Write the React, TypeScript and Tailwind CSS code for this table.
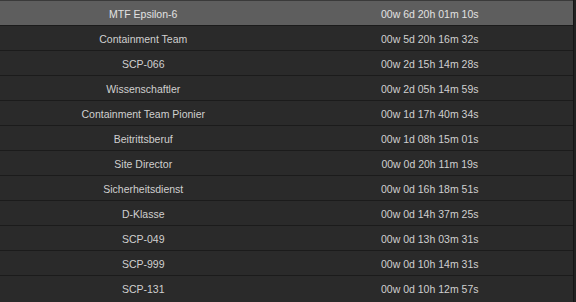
const rows = [
    ["MTF Epsilon-6", "00w 6d 20h 01m 10s"],
    ["Containment Team", "00w 5d 20h 16m 32s"],
    ["SCP-066", "00w 2d 15h 14m 28s"],
    ["Wissenschaftler", "00w 2d 05h 14m 59s"],
    ["Containment Team Pionier", "00w 1d 17h 40m 34s"],
    ["Beitrittsberuf", "00w 1d 08h 15m 01s"],
    ["Site Director", "00w 0d 20h 11m 19s"],
    ["Sicherheitsdienst", "00w 0d 16h 18m 51s"],
    ["D-Klasse", "00w 0d 14h 37m 25s"],
    ["SCP-049", "00w 0d 13h 03m 31s"],
    ["SCP-999", "00w 0d 10h 14m 31s"],
    ["SCP-131", "00w 0d 10h 12m 57s"],
]

export default function App() {
    return (
        <div
            className="flex h-[302px] w-[576px] overflow-hidden bg-[#2a2a2a] text-[10.5px] text-[#d0d0d0]"
            style={{ fontFamily: '"Liberation Sans", Arial, sans-serif' }}
        >
            <div className="flex w-[573px] flex-col">
                {rows.map(([job, time], index) => (
                    <div
                        key={job}
                        className={`flex h-[25px] shrink-0 items-center border-t pt-[3px] ${
                            index === 0
                                ? "border-[#3a3a3a] bg-[#5e5e5e] text-[#e2e2e2]"
                                : "border-[#1b1b1b] bg-[#2a2a2a]"
                        }`}
                    >
                        <div className="w-1/2 text-center">{job}</div>
                        <div className="w-1/2 text-center">{time}</div>
                    </div>
                ))}
            </div>
            <div className="w-[3px] border-l border-[#151515] bg-[#222222]" />
        </div>
    )
}
